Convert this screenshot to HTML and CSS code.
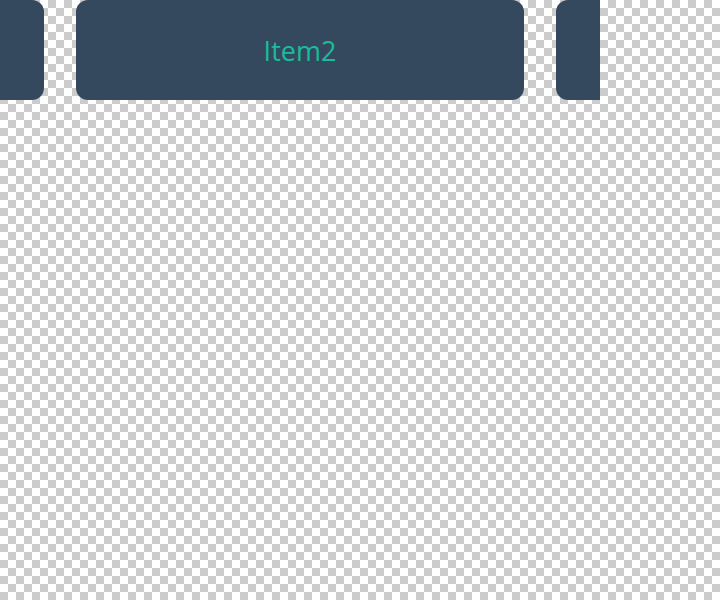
FILE: index.html
```html
<!DOCTYPE html>
<html>
<head>
<meta charset="utf-8">
<link rel="stylesheet" href="styles.css">
</head>
<body>
<div class="carousel">
  <div class="track">
    <div class="item">Item1</div>
    <div class="item">Item2</div>
    <div class="item">Item3</div>
  </div>
</div>
</body>
</html>
```
FILE: styles.css
```css
html, body {
  margin: 0;
  padding: 0;
  height: 100%;
}
body {
  background: conic-gradient(#ffffff 25%, #cccccc 0 50%, #ffffff 0 75%, #cccccc 0) 0 0 / 16px 16px;
  font-family: "Open Sans", "Noto Sans", sans-serif;
}
.carousel {
  width: 600px;
  height: 100px;
  overflow: hidden;
}
.track {
  display: flex;
  gap: 32px;
  margin-left: -404px;
}
.item {
  flex: 0 0 448px;
  height: 100px;
  border-radius: 12px;
  background: #34495e;
  color: #1abc9c;
  font-size: 27px;
  display: flex;
  align-items: center;
  justify-content: center;
}
```
